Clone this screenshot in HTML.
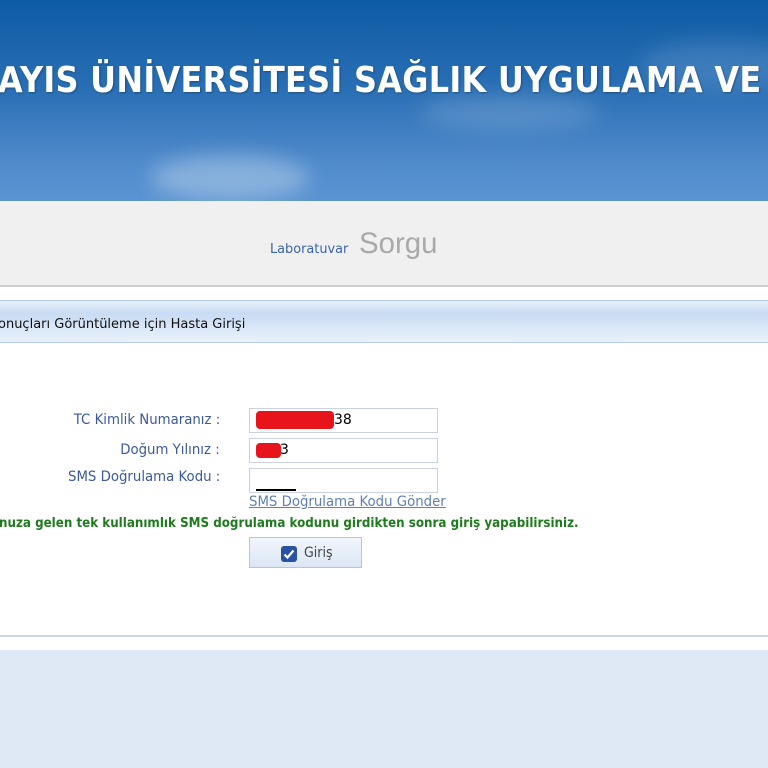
<!DOCTYPE html>
<html><head><meta charset="utf-8"><style>
*{margin:0;padding:0;box-sizing:border-box}
body{width:768px;height:768px;overflow:hidden;background:#fff;font-family:"DejaVu Sans","Liberation Sans",sans-serif;position:relative}
.hdr{position:absolute;left:0;top:0;width:768px;height:201px;background:linear-gradient(180deg,#0e5ba5 0%,#2a6fb5 45%,#4f8acb 80%,#5b94d2 100%);overflow:hidden}
.cloud{position:absolute;border-radius:50%;background:rgba(255,255,255,0.3);filter:blur(10px)}
.title{position:absolute;left:-2px;top:60px;white-space:nowrap;color:#fff;font-family:"DejaVu Sans","Liberation Sans",sans-serif;font-weight:bold;font-size:35.5px;transform:scaleX(.9);transform-origin:0 0;text-shadow:1px 1px 2px rgba(0,0,0,.3);letter-spacing:0.3px}
.band{position:absolute;left:0;top:201px;width:768px;height:86px;background:#f0f0f0;border-bottom:2px solid #cfcfcf}
.lab{position:absolute;left:270px;font-size:13px;color:#3a64b0;transform:scaleX(.99);transform-origin:0 0}
.sorgu{position:absolute;left:359px;font-size:30px;color:#a9a9a9;font-family:"Liberation Sans",sans-serif;transform:scaleX(.98);transform-origin:0 0}
.bar{position:absolute;left:0;top:300px;width:768px;height:43px;background:linear-gradient(180deg,#e6f0fb 0%,#c9dcf3 30%,#e9f1fb 100%);border-top:1px solid #b7cbe6;border-bottom:1px solid #b7cbe6}
.bar span{position:absolute;left:-2px;top:16px;font-size:13px;color:#111;white-space:nowrap}
.lbl{position:absolute;font-size:14px;color:#3c5a9a;white-space:nowrap;text-align:right;right:548px;transform:scaleX(.95);transform-origin:100% 0}
.inp{position:absolute;left:249px;width:189px;height:25px;border:1px solid #c9d3e0;background:#fff}
.red{position:absolute;background:#e8141b;border-radius:4px}
.link{position:absolute;left:249px;top:494px;font-size:14px;color:#6080b0;text-decoration:underline;transform:scaleX(.95);transform-origin:0 0;white-space:nowrap}
.green{position:absolute;left:-1px;top:516px;font-size:13px;font-weight:bold;color:#1e7b1e;white-space:nowrap;transform:scaleX(.916);transform-origin:0 0}
.btn{position:absolute;left:249px;top:537px;width:113px;height:31px;border:1px solid #b2c6e2;background:linear-gradient(180deg,#f2f6fc,#dbe6f5)}
.chk{position:absolute;left:31px;top:8px;width:16px;height:16px;background:#2a52a3;border-radius:3px}
.btn span{position:absolute;left:54px;top:7px;font-size:14px;color:#444;transform:scaleX(.9);transform-origin:0 0}
.line{position:absolute;left:0;top:635px;width:768px;height:2px;background:#cdd7e4}
.foot{position:absolute;left:0;top:650px;width:768px;height:118px;background:#dfe8f5}
</style></head><body>
<div class="hdr">
<div class="cloud" style="left:150px;top:155px;width:160px;height:45px"></div>
<div class="cloud" style="left:420px;top:95px;width:180px;height:35px;opacity:.5"></div>
<div class="cloud" style="left:640px;top:40px;width:160px;height:50px;opacity:.4"></div>
<div class="title">AYIS ÜNİVERSİTESİ SAĞLIK UYGULAMA VE</div>
</div>
<div class="band"><div class="lab" style="top:41px">Laboratuvar</div><div class="sorgu" style="top:26px">Sorgu</div></div>
<div class="bar"><span>onuçları Görüntüleme için Hasta Girişi</span></div>
<div class="lbl" style="top:412px">TC Kimlik Numaranız :</div>
<div class="lbl" style="top:442px">Doğum Yılınız :</div>
<div class="lbl" style="top:469px">SMS Doğrulama Kodu :</div>
<div class="inp" style="top:408px"><div class="red" style="left:6px;top:2px;width:78px;height:18px"></div><span style="position:absolute;left:84px;top:3px;font-size:14px">38</span></div>
<div class="inp" style="top:438px"><div class="red" style="left:6px;top:4px;width:25px;height:15px"></div><span style="position:absolute;left:30px;top:3px;font-size:14px">3</span></div>
<div class="inp" style="top:468px"><div style="position:absolute;left:6px;top:20px;width:40px;height:2px;background:#000"></div></div>
<div class="link">SMS Doğrulama Kodu Gönder</div>
<div class="green">nuza gelen tek kullanımlık SMS doğrulama kodunu girdikten sonra giriş yapabilirsiniz.</div>
<div class="btn"><div class="chk"><svg width="16" height="16"><path d="M3.5 8.5l3 3 6-7" stroke="#fff" stroke-width="2.2" fill="none"/></svg></div><span>Giriş</span></div>
<div class="line"></div>
<div class="foot"></div>
</body></html>
